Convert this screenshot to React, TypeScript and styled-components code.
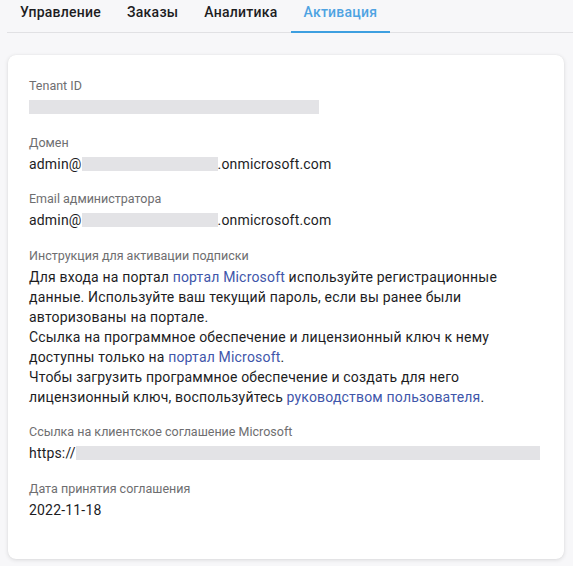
import React from "react";
import styled, { createGlobalStyle } from "styled-components";

const Global = createGlobalStyle`
  html, body { margin: 0; padding: 0; background: #f7f7f9; }
  body { font-family: Roboto, "Noto Sans", "Liberation Sans", sans-serif; color: #1d1d1f; }
  * { box-sizing: border-box; }
`;

const Page = styled.div`
  padding: 0 9px 0 7px;
  min-height: 566px;
`;

const TabBar = styled.nav`
  display: flex;
  border-bottom: 1px solid #e1e1e4;
  margin-right: -9px;
`;

const Tab = styled.div<{ $active?: boolean }>`
  padding: 2px 13px 9px;
  font-size: 14px;
  line-height: 20px;
  font-weight: 500;
  letter-spacing: 0.25px;
  color: ${(p) => (p.$active ? "#4ea3e2" : "#1d1d1f")};
  border-bottom: 2px solid ${(p) => (p.$active ? "#3d9fe0" : "transparent")};
  margin-bottom: -1px;
`;

const Card = styled.section`
  margin: 22px 0 0 1px;
  background: #fff;
  border-radius: 8px;
  box-shadow: 0 1px 4px rgba(0, 0, 0, 0.12), 0 0 1px rgba(0, 0, 0, 0.08);
  padding: 23px 21px 39px;
  display: flex;
  flex-direction: column;
  gap: 17.5px;
`;

const Field = styled.div`
  display: flex;
  flex-direction: column;
  gap: 3px;
`;

const Label = styled.div`
  font-size: 12.5px;
  line-height: 16px;
  color: #6e6e70;
`;

const Value = styled.div`
  font-size: 14px;
  line-height: 20px;
  min-height: 20px;
  letter-spacing: 0.18px;
  color: #1d1d1f;
  display: flex;
  align-items: center;
  white-space: nowrap;
`;

const Redacted = styled.span<{ $w: number }>`
  display: inline-block;
  width: ${(p) => p.$w}px;
  height: 14px;
  background: #e3e3e6;
`;

const Paragraph = styled.div`
  font-size: 14px;
  line-height: 20px;
  letter-spacing: 0.18px;
  color: #1d1d1f;
  white-space: nowrap;
`;

const Link = styled.a`
  color: #3f56aa;
  text-decoration: none;
`;

export default function App() {
  return (
    <>
      <Global />
      <Page>
        <TabBar>
          <Tab>Управление</Tab>
          <Tab>Заказы</Tab>
          <Tab>Аналитика</Tab>
          <Tab $active>Активация</Tab>
        </TabBar>
        <Card>
          <Field>
            <Label>Tenant ID</Label>
            <Value>
              <Redacted $w={290} />
            </Value>
          </Field>
          <Field>
            <Label>Домен</Label>
            <Value>
              admin@<Redacted $w={136} />.onmicrosoft.com
            </Value>
          </Field>
          <Field>
            <Label>Email администратора</Label>
            <Value>
              admin@<Redacted $w={136} />.onmicrosoft.com
            </Value>
          </Field>
          <Field>
            <Label>Инструкция для активации подписки</Label>
            <Paragraph>
              Для входа на портал <Link href="#">портал Microsoft</Link> используйте регистрационные
              <br />
              данные. Используйте ваш текущий пароль, если вы ранее были
              <br />
              авторизованы на портале.
              <br />
              Ссылка на программное обеспечение и лицензионный ключ к нему
              <br />
              доступны только на <Link href="#">портал Microsoft</Link>.
              <br />
              Чтобы загрузить программное обеспечение и создать для него
              <br />
              лицензионный ключ, воспользуйтесь <Link href="#">руководством пользователя</Link>.
            </Paragraph>
          </Field>
          <Field>
            <Label>Ссылка на клиентское соглашение Microsoft</Label>
            <Value>
              https://<Redacted $w={464} />
            </Value>
          </Field>
          <Field>
            <Label>Дата принятия соглашения</Label>
            <Value>2022-11-18</Value>
          </Field>
        </Card>
      </Page>
    </>
  );
}
